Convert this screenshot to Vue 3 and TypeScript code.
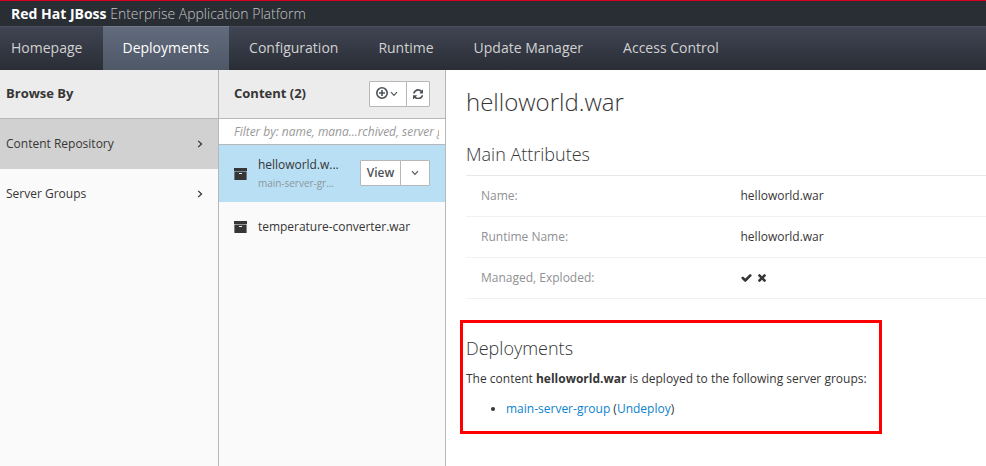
<script setup lang="ts">
import { ref } from 'vue'

const tabs = ['Homepage', 'Deployments', 'Configuration', 'Runtime', 'Update Manager', 'Access Control']
const activeTab = ref('Deployments')
const browse = ['Content Repository', 'Server Groups']
const activeBrowse = ref('Content Repository')
const attributes = [
  { label: 'Name:', value: 'helloworld.war' },
  { label: 'Runtime Name:', value: 'helloworld.war' },
]
</script>

<template>
  <div class="page">
    <header class="brand"><strong>Red Hat JBoss</strong>&nbsp;Enterprise Application Platform</header>
    <nav class="nav">
      <a v-for="tab in tabs" :key="tab" class="tab" :class="{ active: tab === activeTab }" @click="activeTab = tab">{{ tab }}</a>
    </nav>
    <div class="body">
      <section class="column browse">
        <div class="column-head"><h3>Browse By</h3></div>
        <a v-for="b in browse" :key="b" class="browse-item" :class="{ selected: b === activeBrowse }" @click="activeBrowse = b">
          <span>{{ b }}</span>
          <svg class="angle" viewBox="0 0 6 8"><path d="M1.2 .9 4.5 4 1.2 7.1" /></svg>
        </a>
      </section>

      <section class="column content">
        <div class="column-head">
          <h3>Content (2)</h3>
          <div class="btn-group">
            <button class="btn add">
              <svg class="plus" viewBox="0 0 12 12"><circle cx="6" cy="6" r="5.2" /><path d="M6 3v6M3 6h6" /></svg>
              <svg class="down" viewBox="0 0 8 6"><path d="M1 1.2 4 4.4 7 1.2" /></svg>
            </button>
            <button class="btn reload">
              <svg class="refresh" viewBox="0 0 1536 1536"><path d="M1511 928q0 5-1 7-64 268-268 434.500T764 1536q-146 0-282.500-55T238 1324l-129 129q-19 19-45 19t-45-19-19-45V960q0-26 19-45t45-19h448q26 0 45 19t19 45-19 45l-137 137q71 66 161 102t187 36q134 0 250-65t186-179q11-17 53-117 8-23 30-23h192q13 0 22.500 9.500t9.500 22.500zm25-800v448q0 26-19 45t-45 19h-448q-26 0-45-19t-19-45 19-45l138-138Q969 256 768 256q-134 0-250 65T332 500q-11 17-53 117-8 23-30 23H50q-13 0-22.500-9.500T18 608v-7q65-268 270-434.500T768 0q146 0 284 55.500T1297 212l130-129q19-19 45-19t45 19 19 45z" /></svg>
            </button>
          </div>
        </div>
        <div class="filter"><input type="text" placeholder="Filter by: name, mana...rchived, server group" /></div>
        <div class="item selected">
          <svg class="archive" viewBox="0 0 13 12"><path d="M0 0h13v3H0zM.4 3.500h12.200V12H.4z" /><path class="slot" d="M5 5h3v1H5z" /></svg>
          <div class="item-text">
            <span>helloworld.w...</span>
            <small>main-server-gr...</small>
          </div>
          <div class="btn-group">
            <button class="btn view">View</button>
            <button class="btn more"><svg class="down" viewBox="0 0 8 6"><path d="M1 1.2 4 4.4 7 1.2" /></svg></button>
          </div>
        </div>
        <div class="item plain">
          <svg class="archive" viewBox="0 0 13 12"><path d="M0 0h13v3H0zM.4 3.500h12.200V12H.4z" /><path class="slot" d="M5 5h3v1H5z" /></svg>
          <div class="item-text"><span>temperature-converter.war</span></div>
        </div>
      </section>

      <main class="preview">
        <h1>helloworld.war</h1>
        <h2>Main Attributes</h2>
        <dl class="attributes">
          <div v-for="a in attributes" :key="a.label" class="attribute"><dt>{{ a.label }}</dt><dd>{{ a.value }}</dd></div>
          <div class="attribute">
            <dt>Managed, Exploded:</dt>
            <dd class="flags">
              <svg class="check" viewBox="121 334 1550 1188"><path d="M1671 566q0 40-28 68l-724 724-136 136q-28 28-68 28t-68-28l-136-136-362-362q-28-28-28-68t28-68l136-136q28-28 68-28t68 28l294 295 656-657q28-28 68-28t68 28l136 136q28 28 28 68z" /></svg>
              <svg class="times" viewBox="302 366 1188 1188"><path d="M1490 1322q0 40-28 68l-136 136q-28 28-68 28t-68-28l-294-294-294 294q-28 28-68 28t-68-28l-136-136q-28-28-28-68t28-68l294-294-294-294q-28-28-28-68t28-68l136-136q28-28 68-28t68 28l294 294 294-294q28-28 68-28t68 28l136 136q28 28 28 68t-28 68l-294 294 294 294q28 28 28 68z" /></svg>
            </dd>
          </div>
        </dl>
        <section class="deployments">
          <h2>Deployments</h2>
          <p>The content <strong>helloworld.war</strong> is deployed to the following server groups:</p>
          <ul><li><a>main-server-group</a> (<a>Undeploy</a>)</li></ul>
        </section>
      </main>
    </div>
  </div>
</template>

<style>
body { overflow: hidden; }
</style>

<style scoped>
* { box-sizing: border-box; }
.page { display: flex; flex-direction: column; width: 100%; height: 466px; overflow: hidden; background: #fff; color: #363636; font: 12px/20px "Open Sans", "Noto Sans", sans-serif; }
h1, h2, h3, p, ul, dl, dd { margin: 0; padding: 0; }
.brand { flex: none; height: 26px; border-top: 1px solid #d8001f; background: #292e34; color: #c4c5c8; padding-left: 11px; font-size: 14px; line-height: 26px; font-weight: 300; }
.brand strong { color: #fff; font-weight: 700; }
.nav { flex: none; display: flex; height: 44px; border-top: 1px solid #4a505c; background: linear-gradient(#3f4553, #2a2d35); font-size: 14px; line-height: 42px; color: #d1d1d1; }
.tab { padding: 0 20px; margin-top: -1px; border-top: 1px solid transparent; cursor: pointer; white-space: nowrap; }
.tab:first-child { padding-left: 11px; padding-right: 20.6px; }
.tab.active { color: #fff; padding-left: 19.500px; border-color: #747c8c; background: linear-gradient(#626b7d, #4f5867); }
.body { flex: 1; min-height: 0; display: flex; }
.column { flex: none; border-right: 1px solid #b7b7bb; background: #fafafa; }
.browse { width: 219px; }
.content { width: 227px; }
.column-head { height: 49px; display: flex; align-items: center; justify-content: space-between; background: #ececec; border-bottom: 1px solid #b7b7bb; padding: 0 15px 0 6px; }
.content .column-head { padding-left: 15px; }
h3 { font-size: 13px; font-weight: 700; line-height: 20px; padding-bottom: 2px; }
.browse-item { height: 50px; display: flex; align-items: center; justify-content: space-between; padding: 0 15px 0 6px; cursor: pointer; }
.browse-item.selected { background: #d1d1d1; }
svg { display: block; flex: none; }
.angle { width: 6px; height: 8px; fill: none; stroke: #363636; stroke-width: 1.3; }
.btn-group { display: flex; flex: none; }
.btn { height: 26px; border: 1px solid #b7b7b7; margin: 0; padding: 0; background: #fff; color: #4d5258; display: flex; align-items: center; justify-content: center; font: 600 12px/22px "Open Sans", "Noto Sans", sans-serif; }
.btn:first-child { border-radius: 1px 0 0 1px; }
.btn + .btn { margin-left: -1px; border-radius: 0 1px 1px 0; }
.add { width: 38px; gap: 2px; padding: 0 2px 2px 0; }
.add .down { margin-top: 2px; }
.reload { width: 24px; }
.item .btn-group { padding-bottom: 2px; }
.view { width: 41px; }
.more { width: 30px; }
.plus { width: 12px; height: 12px; fill: none; stroke: #4d5258; stroke-width: 1.6; }
.down { width: 8px; height: 6px; fill: none; stroke: #4d5258; stroke-width: 1.1; }
.refresh { width: 10.500px; height: 10.500px; fill: #4d5258; }
.filter { height: 26px; border-bottom: 1px solid #b7b7bb; background: #fff; padding: 0 6px 0 15px; }
.filter input { display: block; width: 100%; height: 25px; border: 0; margin: 0; padding: 0; outline: 0; background: none; font: italic 12px/20px "Open Sans", "Noto Sans", sans-serif; letter-spacing: -.03px; }
.filter input::placeholder { color: #999; opacity: 1; }
.item { display: flex; align-items: center; padding: 0 15px; }
.item.selected { height: 57px; background: #b9dff4; }
.item.plain { height: 50px; }
.archive { width: 13px; height: 12px; margin-right: 11px; fill: #363636; }
.archive .slot { fill: #e8eef1; }
.item-text { flex: 1; display: flex; flex-direction: column; white-space: nowrap; letter-spacing: -.03px; }
.item-text small { font-size: 10px; line-height: 17px; color: #8b979d; }
.preview { flex: 1; min-width: 0; padding: 18px 0 0 20px; }
h1 { font-size: 24px; line-height: 28px; font-weight: 300; }
h2 { font-size: 18px; line-height: 20px; font-weight: 300; }
.preview > h2 { margin-top: 28px; }
.attributes { margin-top: 11px; border-top: 1px solid #e8e8e8; }
.attribute { height: 41px; display: flex; align-items: center; border-bottom: 1px solid #f1f1f1; padding-left: 15px; }
dt { width: 259.500px; color: #8f9194; }
.flags { display: flex; align-items: center; gap: 6px; padding-left: .5px; }
.flags svg { fill: #363636; }
.check { width: 11px; height: 8px; }
.times { width: 8px; height: 8px; }
.deployments { width: 422px; height: 114px; margin: 21px 0 0 -6px; border: 3px solid #f00; padding: 15px 0 0 3px; }
.deployments p { margin-top: 11px; white-space: nowrap; }
ul { margin-top: 10px; padding-left: 40px; }
a { text-decoration: none; }
li a { color: #0c83ce; }
</style>
